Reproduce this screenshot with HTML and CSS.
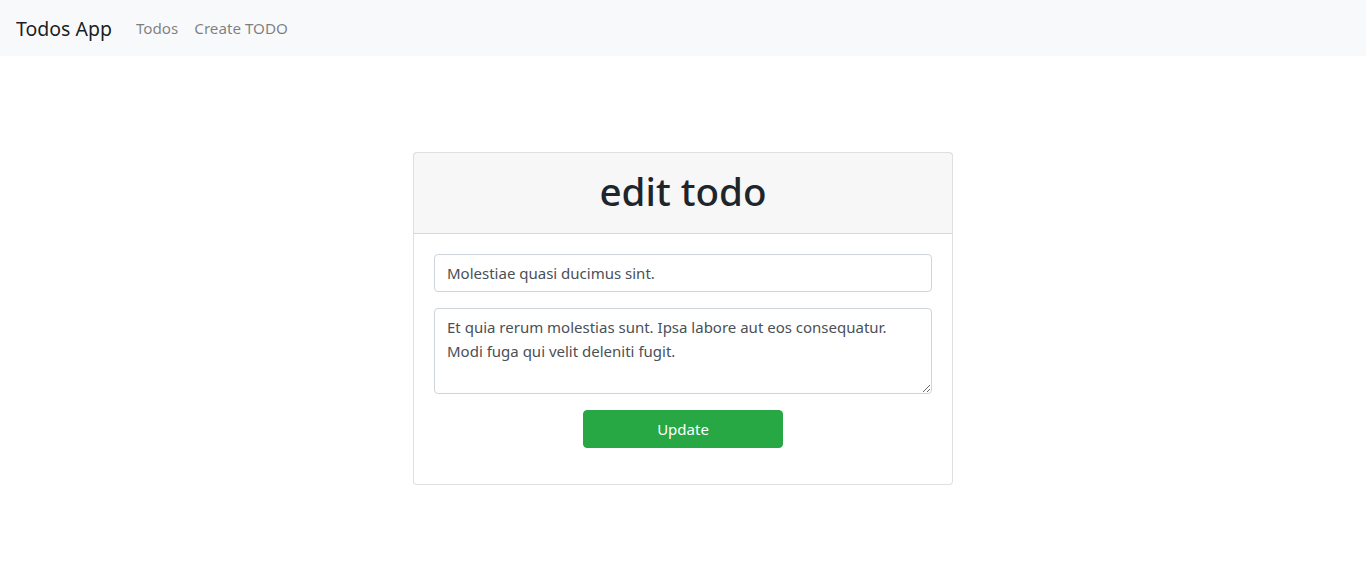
FILE: index.html
```html
<!DOCTYPE html>
<html lang="en">
<head>
<meta charset="utf-8">
<title>Todos App</title>
<link rel="stylesheet" href="styles.css">
</head>
<body>
<nav class="navbar">
  <a class="brand" href="#">Todos App</a>
  <ul class="nav">
    <li><a class="nav-link" href="#">Todos</a></li>
    <li><a class="nav-link" href="#">Create TODO</a></li>
  </ul>
</nav>
<main class="container">
  <div class="card">
    <div class="card-header">
      <h1 class="title">edit todo</h1>
    </div>
    <div class="card-body">
      <form class="form">
        <input class="control" type="text" value="Molestiae quasi ducimus sint.">
        <textarea class="control area" rows="3">Et quia rerum molestias sunt. Ipsa labore aut eos consequatur. Modi fuga qui velit deleniti fugit.</textarea>
        <div class="actions">
          <button class="btn" type="button">Update</button>
        </div>
      </form>
    </div>
  </div>
</main>
</body>
</html>
```
FILE: styles.css
```css
* { box-sizing: border-box; }
html, body { margin: 0; }
body {
  font-family: "Noto Sans", "Open Sans", sans-serif;
  font-size: 16px;
  line-height: 1.5;
  color: #212529;
  background: #fff;
}
.navbar {
  display: flex;
  align-items: center;
  height: 56px;
  padding: 8px 16px;
  background: #f8f9fa;
}
.brand {
  font-size: 19.5px;
  line-height: 30px;
  color: rgba(0,0,0,.9);
  text-decoration: none;
  margin-right: 16px;
  padding-top: 2px;
}
.nav {
  display: flex;
  list-style: none;
  margin: 0;
  padding: 0;
}
.nav-link {
  display: block;
  padding: 8px;
  color: rgba(0,0,0,.5);
  text-decoration: none;
  font-size: 15.2px;
}
.container {
  display: flex;
  justify-content: center;
  padding-top: 96px;
}
.card {
  width: 540px;
  border: 1px solid rgba(0,0,0,.125);
  border-radius: 4px;
  background: #fff;
}
.card-header {
  padding: 12px 20px;
  background: rgba(0,0,0,.03);
  border-bottom: 1px solid rgba(0,0,0,.125);
}
.title {
  margin: 0 0 8px;
  padding-top: 2px;
  height: 48px;
  font-size: 38.6px;
  font-weight: 500;
  line-height: 48px;
  text-align: center;
}
.card-body { padding: 20px; }
.form {
  display: flex;
  flex-direction: column;
  gap: 16px;
  margin-bottom: 16px;
}
.control {
  display: block;
  width: 100%;
  height: 38px;
  padding: 6px 12px;
  font: inherit;
  font-size: 15px;
  line-height: 24px;
  color: #495057;
  background: #fff;
  border: 1px solid #ced4da;
  border-radius: 4px;
  margin: 0;
}
.area {
  height: 86px;
  resize: vertical;
}
.actions { display: flex; justify-content: center; }
.btn {
  width: 200px;
  height: 38px;
  font: inherit;
  font-size: 15px;
  color: #fff;
  background: #28a745;
  border: 1px solid #28a745;
  border-radius: 4px;
}
```
